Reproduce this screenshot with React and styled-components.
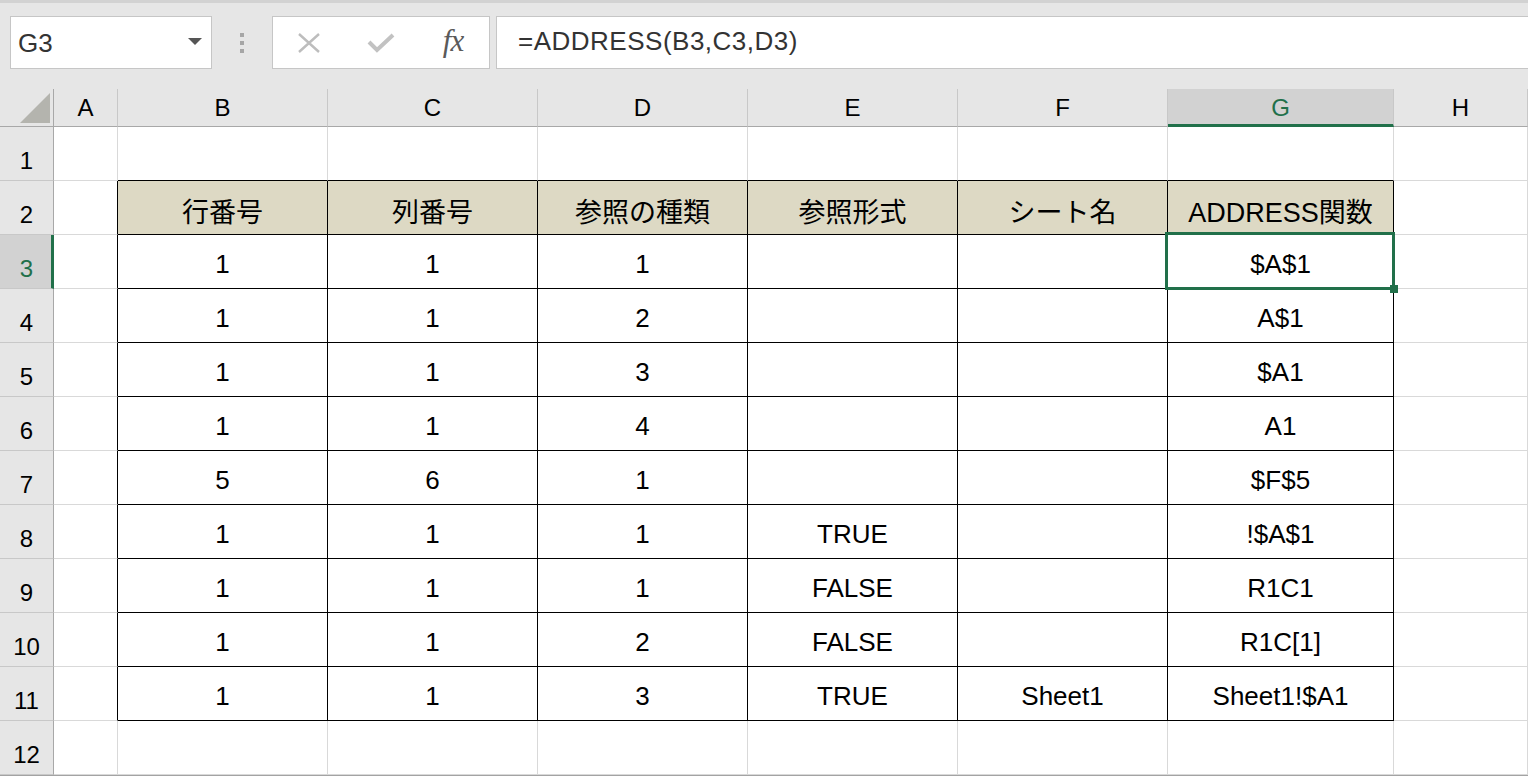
import styled, { createGlobalStyle } from "styled-components";

const GREEN = "#21704a";

const columns = ["A", "B", "C", "D", "E", "F", "G", "H"];

const headings = ["行番号", "列番号", "参照の種類", "参照形式", "シート名", "ADDRESS関数"];

const records = [
  [1, 1, 1, "", "", "$A$1"],
  [1, 1, 2, "", "", "A$1"],
  [1, 1, 3, "", "", "$A1"],
  [1, 1, 4, "", "", "A1"],
  [5, 6, 1, "", "", "$F$5"],
  [1, 1, 1, "TRUE", "", "!$A$1"],
  [1, 1, 1, "FALSE", "", "R1C1"],
  [1, 1, 2, "FALSE", "", "R1C[1]"],
  [1, 1, 3, "TRUE", "Sheet1", "Sheet1!$A1"],
];

const ROW_COUNT = 12;
const ACTIVE = { row: 3, col: 6 }; // G3

// table occupies rows 2..11, columns B..G (1..6)
const inTable = (r, c) => r >= 2 && r <= 11 && c >= 1 && c <= 6;

const cellValue = (r, c) => {
  if (r === 2 && c >= 1 && c <= 6) return headings[c - 1];
  if (r >= 3 && r <= 11 && c >= 1 && c <= 6) return records[r - 3][c - 1];
  return "";
};

const GlobalStyle = createGlobalStyle`
  html, body {
    margin: 0;
    padding: 0;
    background: #ffffff;
  }
  body {
    font-family: "Liberation Sans", "Noto Sans CJK JP", sans-serif;
    color: #000;
  }
`;

const Page = styled.div`
  width: 1528px;
  height: 776px;
  overflow: hidden;
  background: #a3a3a3;
`;

const Toolbar = styled.div`
  height: 89px;
  box-sizing: border-box;
  border-top: 3px solid #d2d2d2;
  padding-top: 13px;
  display: flex;
  align-items: flex-start;
  background: #e6e6e6;
`;

const NameBox = styled.div`
  margin-left: 10px;
  width: 202px;
  height: 53px;
  box-sizing: border-box;
  border: 1px solid #c6c6c6;
  background: #fff;
  display: flex;
  align-items: center;
  justify-content: space-between;
  padding: 2px 9px 0 7px;
  font-size: 26px;
  color: #333;
`;

const Caret = styled.span`
  width: 0;
  height: 0;
  border-left: 7px solid transparent;
  border-right: 7px solid transparent;
  border-top: 7px solid #555;
  margin-bottom: 4px;
`;

const Grip = styled.div`
  width: 60px;
  height: 53px;
  display: flex;
  flex-direction: column;
  align-items: center;
  justify-content: center;
  gap: 4px;

  span {
    width: 4px;
    height: 4px;
    background: #a6a6a6;
  }
`;

const FxBox = styled.div`
  width: 218px;
  height: 53px;
  box-sizing: border-box;
  border: 1px solid #c6c6c6;
  background: #fff;
  display: flex;
  align-items: center;
`;

const IconSlot = styled.div`
  width: 72px;
  height: 100%;
  display: flex;
  align-items: center;
  justify-content: center;
`;

const FxLabel = styled.span`
  font-family: "Liberation Serif", serif;
  font-style: italic;
  font-size: 31px;
  color: #5a5a5a;
  letter-spacing: -1px;
  margin-top: -4px;
`;

const FormulaBox = styled.div`
  flex: 1;
  margin-left: 6px;
  margin-right: -2px;
  height: 53px;
  box-sizing: border-box;
  border: 1px solid #c6c6c6;
  background: #fff;
  display: flex;
  align-items: center;
  padding: 0 0 2px 21px;
  font-size: 26px;
  letter-spacing: 0.5px;
  color: #333;
`;

const Sheet = styled.div`
  display: grid;
  grid-template-columns: 54px 64px 210px 210px 210px 210px 210px 226px 1fr;
  grid-template-rows: 38px repeat(${ROW_COUNT}, 54px);
  background: #fff;
`;

const Corner = styled.div`
  position: relative;
  background: #e6e6e6;
  border-right: 1px solid #a8a8a8;
  border-bottom: 1px solid #a8a8a8;
  box-sizing: border-box;

  &::after {
    content: "";
    position: absolute;
    left: 20px;
    top: 4px;
    width: 30px;
    height: 30px;
    background: #b4b4ae;
    clip-path: polygon(100% 0, 100% 100%, 0 100%);
  }
`;

const ColHead = styled.div`
  box-sizing: border-box;
  display: flex;
  align-items: center;
  justify-content: center;
  font-size: 24px;
  padding-top: ${(p) => (p.$active ? 2 : 0)}px;
  background: ${(p) => (p.$active ? "#d2d2d2" : "#e6e6e6")};
  color: ${(p) => (p.$active ? GREEN : "#000")};
  border-right: 1px solid #c8c8c8;
  border-bottom: ${(p) => (p.$active ? `3px solid ${GREEN}` : "1px solid #a8a8a8")};
`;

const RowHead = styled.div`
  box-sizing: border-box;
  display: flex;
  align-items: flex-end;
  justify-content: center;
  padding-bottom: 5px;
  padding-left: ${(p) => (p.$active ? 2 : 0)}px;
  font-size: 24px;
  background: ${(p) => (p.$active ? "#d2d2d2" : "#e6e6e6")};
  color: ${(p) => (p.$active ? GREEN : "#000")};
  border-bottom: 1px solid #c8c8c8;
  border-right: ${(p) => (p.$active ? `3px solid ${GREEN}` : "1px solid #a8a8a8")};
`;

const Cell = styled.div`
  position: relative;
  box-sizing: border-box;
  display: flex;
  align-items: center;
  justify-content: center;
  padding-top: ${(p) => (p.$heading ? 5 : 6)}px;
  font-size: ${(p) => (p.$heading ? 27 : 26)}px;
  white-space: nowrap;
  background: ${(p) => (p.$heading ? "#ddd9c4" : "#fff")};
  border-right: 1px solid ${(p) => (p.$darkRight ? "#000" : "#d9d9d9")};
  border-bottom: 1px solid ${(p) => (p.$darkBottom ? "#000" : "#d9d9d9")};
`;

const Selection = styled.div`
  position: absolute;
  top: -3px;
  left: -3px;
  right: -2px;
  bottom: -2px;
  border: 3px solid ${GREEN};
  z-index: 2;
  pointer-events: none;
`;

const FillHandle = styled.div`
  position: absolute;
  right: -6px;
  bottom: -6px;
  width: 8px;
  height: 8px;
  background: ${GREEN};
`;

function CancelIcon() {
  return (
    <svg width="24" height="22" viewBox="0 0 24 22">
      <path d="M2 2 L22 20 M22 2 L2 20" stroke="#bdbdbd" strokeWidth="2.4" fill="none" />
    </svg>
  );
}

function EnterIcon() {
  return (
    <svg width="28" height="22" viewBox="0 0 28 22">
      <path d="M2 10 L10 18 L26 3" stroke="#c2c2c2" strokeWidth="4" fill="none" />
    </svg>
  );
}

export default function App() {
  const rows = Array.from({ length: ROW_COUNT }, (_, i) => i + 1);

  return (
    <Page>
      <GlobalStyle />
      <Toolbar>
        <NameBox>
          <span>G3</span>
          <Caret />
        </NameBox>
        <Grip>
          <span />
          <span />
          <span />
        </Grip>
        <FxBox>
          <IconSlot>
            <CancelIcon />
          </IconSlot>
          <IconSlot>
            <EnterIcon />
          </IconSlot>
          <IconSlot>
            <FxLabel>fx</FxLabel>
          </IconSlot>
        </FxBox>
        <FormulaBox>=ADDRESS(B3,C3,D3)</FormulaBox>
      </Toolbar>

      <Sheet>
        <Corner />
        {columns.map((name, c) => (
          <ColHead key={name} $active={c === ACTIVE.col}>
            {name}
          </ColHead>
        ))}

        {rows.map((r) => [
          <RowHead key={`h${r}`} $active={r === ACTIVE.row}>
            {r}
          </RowHead>,
          ...columns.map((name, c) => {
            const active = r === ACTIVE.row && c === ACTIVE.col;
            return (
              <Cell
                key={`${name}${r}`}
                $heading={r === 2 && inTable(r, c)}
                $darkRight={inTable(r, c) || inTable(r, c + 1)}
                $darkBottom={inTable(r, c) || inTable(r + 1, c)}
              >
                {cellValue(r, c)}
                {active && (
                  <Selection>
                    <FillHandle />
                  </Selection>
                )}
              </Cell>
            );
          }),
        ])}
      </Sheet>
    </Page>
  );
}
